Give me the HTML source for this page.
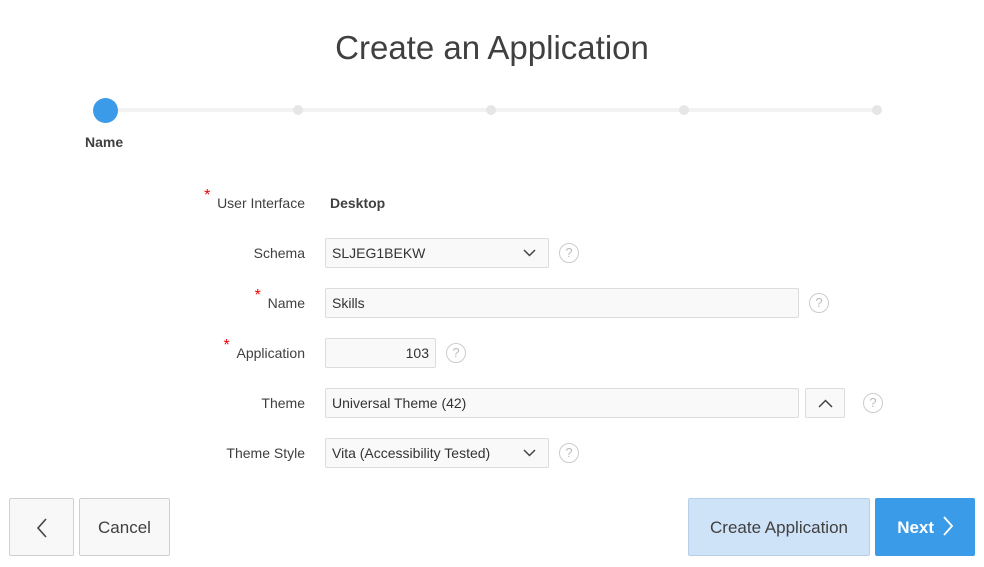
<!DOCTYPE html><html><head><style>
body{margin:0;width:984px;height:567px;background:#fff;font-family:"Liberation Sans",sans-serif;color:#404040;position:relative;overflow:hidden}
.a{position:absolute}
.lbl{position:absolute;right:679px;font-size:14px;color:#404040;text-align:right}
.star{color:#e00;font-size:16px;position:absolute;top:-8px;left:-13px}
.in{position:absolute;height:28px;border:1px solid #dcdcdc;border-radius:2px;background:#f9f9f9;font-size:14px;line-height:28px;padding:0 6px;box-sizing:content-box;color:#333}
.help{position:absolute;width:18px;height:18px;border:1px solid #ccc;border-radius:50%;color:#bbb;font-size:13px;text-align:center;line-height:18px}
.btn{position:absolute;top:498px;height:58px;border:1px solid #d0d0d0;border-radius:2px;background:#f8f8f8;font-size:17px;line-height:58px;text-align:center;box-sizing:border-box}
.dot{position:absolute;width:10px;height:10px;border-radius:50%;background:#e6e6e6;top:105px}
</style></head><body>
<div class="a" style="top:29px;width:984px;text-align:center;font-size:33px;font-weight:300;color:#404040">Create an Application</div>
<div class="a" style="left:105px;top:108px;width:772px;height:4px;background:#f2f2f2"></div>
<div class="a" style="left:93px;top:98px;width:25px;height:25px;border-radius:50%;background:#3b9be8"></div>
<div class="dot" style="left:293px"></div><div class="dot" style="left:486px"></div><div class="dot" style="left:679px"></div><div class="dot" style="left:872px"></div>
<div class="a" style="left:85px;top:134px;font-size:14px;font-weight:bold;color:#404040">Name</div>

<div class="lbl" style="top:195px"><span class="star">*</span>User Interface</div>
<div class="a" style="left:330px;top:195px;font-size:14px;font-weight:bold">Desktop</div>

<div class="lbl" style="top:245px">Schema</div>
<div class="in" style="left:325px;top:238px;width:210px">SLJEG1BEKW<svg class="a" style="right:12px;top:10px" width="13" height="8"><path d="M1 1l5.5 5.5L12 1" fill="none" stroke="#444" stroke-width="1.5"/></svg></div>
<div class="help" style="left:559px;top:243px">?</div>

<div class="lbl" style="top:295px"><span class="star">*</span>Name</div>
<div class="in" style="left:325px;top:288px;width:460px">Skills</div>
<div class="help" style="left:809px;top:293px">?</div>

<div class="lbl" style="top:345px"><span class="star">*</span>Application</div>
<div class="in" style="left:325px;top:338px;width:97px;text-align:right">103</div>
<div class="help" style="left:446px;top:343px">?</div>

<div class="lbl" style="top:395px">Theme</div>
<div class="in" style="left:325px;top:388px;width:460px">Universal Theme (42)</div>
<div class="in" style="left:805px;top:388px;width:26px;padding:0 6px"><svg class="a" style="left:12px;top:10px" width="15" height="9"><path d="M1 8l6.5-6.5L14 8" fill="none" stroke="#444" stroke-width="1.5"/></svg></div>
<div class="help" style="left:863px;top:393px">?</div>

<div class="lbl" style="top:445px">Theme Style</div>
<div class="in" style="left:325px;top:438px;width:210px">Vita (Accessibility Tested)<svg class="a" style="right:12px;top:10px" width="13" height="8"><path d="M1 1l5.5 5.5L12 1" fill="none" stroke="#444" stroke-width="1.5"/></svg></div>
<div class="help" style="left:559px;top:443px">?</div>

<div class="btn" style="left:9px;width:65px"><svg style="margin-top:19px" width="12" height="20"><path d="M10 1L2 10l8 9" fill="none" stroke="#444" stroke-width="1.6"/></svg></div>
<div class="btn" style="left:79px;width:91px">Cancel</div>
<div class="btn" style="left:688px;width:182px;background:#cfe3f8;border-color:#b7cfe8">Create Application</div>
<div class="btn" style="left:875px;width:100px;background:#3a9be8;border-color:#3a9be8;color:#fff;font-weight:bold">Next <svg style="vertical-align:-3px;margin-left:4px" width="10" height="20"><path d="M1 1l8 9-8 9" fill="none" stroke="#fff" stroke-width="1.8"/></svg></div>
</body></html>
